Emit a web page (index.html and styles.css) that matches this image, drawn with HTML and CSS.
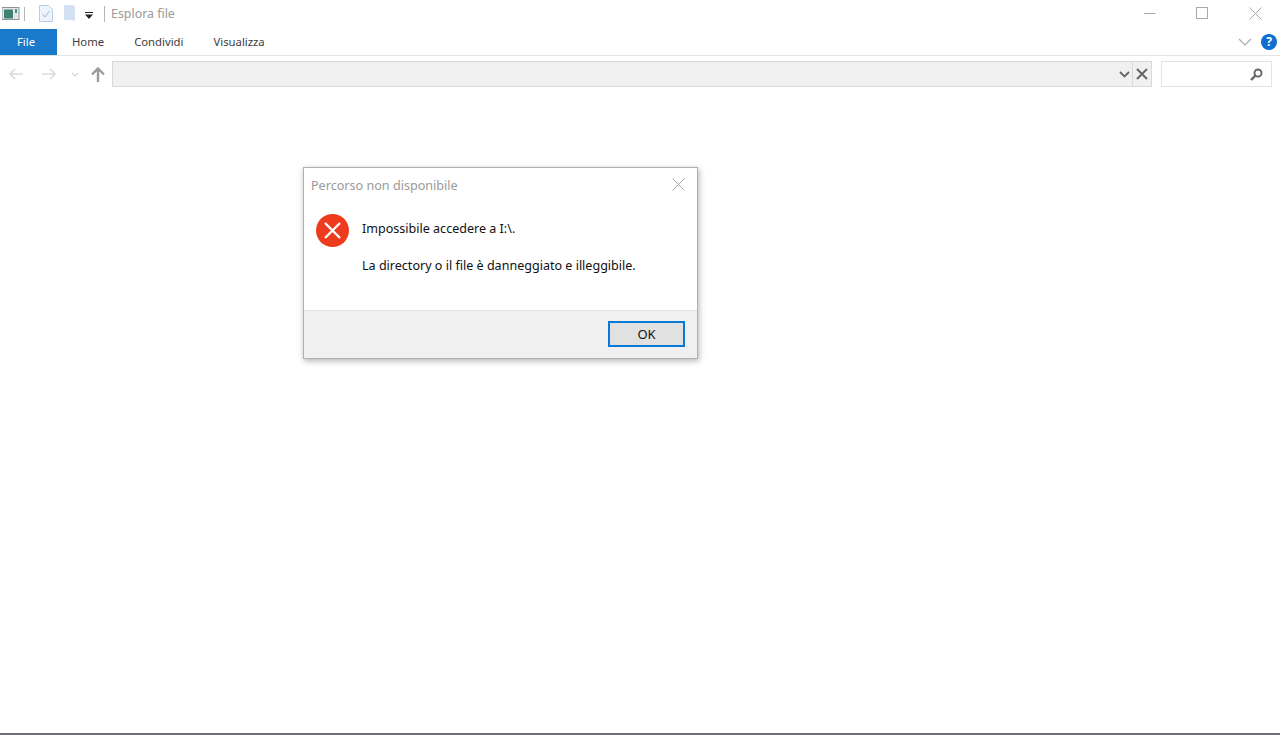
FILE: index.html
```html
<!DOCTYPE html>
<html lang="it">
<head>
  <meta charset="UTF-8">
  <title>Esplora file</title>
  <link rel="stylesheet" href="styles.css">
</head>
<body>
  <div class="window">
    <div class="titlebar">
      <svg class="qa-app" width="20" height="16" viewBox="0 0 20 16">
        <rect x="0" y="1.500" width="17" height="12" fill="#e4e8ea" stroke="#8b9499"/>
        <rect x="2" y="3.500" width="9" height="9" fill="#3f8273"/>
        <rect x="13" y="3" width="2" height="4" fill="#4d8d80"/>
      </svg>
      <span class="qa-sep"></span>
      <svg class="qa-check" width="14" height="17" viewBox="0 0 14 17">
        <path d="M.5.5h9l4 4v12H.5z" fill="#eef4fb" stroke="#b5cbe6"/>
        <path d="M3.5 9l2.5 3 4.5-6" fill="none" stroke="#9db8d6"/>
      </svg>
      <svg class="qa-folder" width="11" height="17" viewBox="0 0 11 17">
        <path d="M0 0h8l3 1v15l-3-1H0z" fill="#d3e1f3"/>
      </svg>
      <svg class="qa-more" width="8" height="7" viewBox="0 0 8 7">
        <rect x="0" y="0" width="8" height="1" fill="#222"/>
        <path d="M0 2.500h8L4 7z" fill="#222"/>
      </svg>
      <span class="qa-sep qa-sep-tall"></span>
      <span class="title">Esplora file</span>
      <div class="win-controls">
        <svg width="13" height="13" viewBox="0 0 13 13"><path d="M1 6.500h11.500" stroke="#a9a9a9"/></svg>
        <svg width="13" height="13" viewBox="0 0 13 13"><rect x=".5" y=".5" width="11" height="11" fill="none" stroke="#a9a9a9"/></svg>
        <svg width="13" height="13" viewBox="0 0 13 13"><path d="M.5.500l12 12M12.500.500l-12 12" stroke="#a9a9a9"/></svg>
      </div>
    </div>

    <div class="ribbon">
      <div class="tab tab-file">File</div>
      <div class="tab">Home</div>
      <div class="tab">Condividi</div>
      <div class="tab">Visualizza</div>
      <div class="ribbon-right">
        <svg width="14" height="8" viewBox="0 0 14 8"><path d="M1 1l6 6 6-6" fill="none" stroke="#a9a9a9" stroke-width="1.200"/></svg>
        <span class="help">?</span>
      </div>
    </div>

    <div class="navbar">
      <svg class="nav-back" width="16" height="12" viewBox="0 0 16 12"><path d="M15 6H2M7 1L2 6l5 5" fill="none" stroke="#dcdcdc" stroke-width="1.600"/></svg>
      <svg class="nav-forward" width="16" height="12" viewBox="0 0 16 12"><path d="M1 6h13M9 1l5 5-5 5" fill="none" stroke="#dcdcdc" stroke-width="1.600"/></svg>
      <svg class="nav-recent" width="8" height="5" viewBox="0 0 8 5"><path d="M1 1l3 3 3-3" fill="none" stroke="#d5d5d5" stroke-width="1.200"/></svg>
      <svg class="nav-up" width="14" height="15" viewBox="0 0 14 15"><path d="M7 15V2M1 7.500L7 1.500l6 6" fill="none" stroke="#9a9a9a" stroke-width="2.400"/></svg>
      <div class="address">
        <div class="address-field">
          <svg width="11" height="7" viewBox="0 0 11 7"><path d="M1 1l4.500 4.500L10 1" fill="none" stroke="#666" stroke-width="1.800"/></svg>
        </div>
        <div class="address-stop">
          <svg width="12" height="12" viewBox="0 0 12 12"><path d="M1 1l10 10M11 1L1 11" stroke="#666" stroke-width="2"/></svg>
        </div>
      </div>
      <div class="search">
        <svg width="13" height="13" viewBox="0 0 13 13"><circle cx="8" cy="5" r="3.500" fill="none" stroke="#666" stroke-width="1.900"/><path d="M5.500 7.500L1 12" stroke="#666" stroke-width="2.400"/></svg>
      </div>
    </div>
  </div>

  <div class="dialog">
    <div class="dialog-head">
      <span class="dialog-title">Percorso non disponibile</span>
      <svg width="13" height="13" viewBox="0 0 13 13"><path d="M.5.500l12 12M12.500.500l-12 12" stroke="#a9a9a9"/></svg>
    </div>
    <div class="dialog-body">
      <svg class="error-icon" width="33" height="33" viewBox="0 0 33 33">
        <circle cx="16.500" cy="16.500" r="16.500" fill="#ef3b1d"/>
        <path d="M9 9l15 15M24 9L9 24" stroke="#fff" stroke-width="2.400"/>
      </svg>
      <div class="message">
        <p>Impossibile accedere a I:\.</p>
        <p>La directory o il file è danneggiato e illeggibile.</p>
      </div>
    </div>
    <div class="dialog-foot">
      <button class="ok">OK</button>
    </div>
  </div>
</body>
</html>
```

FILE: styles.css
```css
* {
  margin: 0;
  padding: 0;
  box-sizing: border-box;
}

body {
  background: #fff;
  font-family: "Noto Sans", "Open Sans", sans-serif;
  height: 735px;
  overflow: hidden;
  position: relative;
  border-bottom: 2px solid #6b7076;
}

.titlebar {
  height: 29px;
  display: flex;
  align-items: center;
  padding: 0 0 2px 2px;
}

.qa-sep {
  width: 1px;
  height: 14px;
  background: #b5b5b5;
  margin-left: 2px;
}

.qa-check { margin-left: 14px; }
.qa-folder { margin-left: 11px; }
.qa-more { margin-left: 10px; margin-top: 3px; }
.qa-sep-tall { height: 16px; margin-left: 11px; }

.title {
  font-size: 12.400px;
  color: #9a9a9a;
  margin-left: 6px;
}

.win-controls {
  margin-left: auto;
  display: flex;
  gap: 40px;
  padding-right: 18px;
  align-items: center;
}

.ribbon {
  height: 27px;
  display: flex;
  border-bottom: 1px solid #e4e4e4;
}

.tab {
  font-size: 11.300px;
  color: #3c3c3c;
  line-height: 26px;
  padding: 0 15px;
}

.tab-file {
  width: 57px;
  background: #1979ca;
  color: #fff;
  text-align: center;
  padding: 0 5px 0 0;
}

.ribbon-right {
  margin-left: auto;
  display: flex;
  align-items: center;
  gap: 9px;
  padding-right: 3px;
}

.help {
  width: 16px;
  height: 16px;
  border-radius: 50%;
  background: #0f6fd0;
  color: #fff;
  font-size: 12px;
  font-weight: 700;
  line-height: 16px;
  text-align: center;
}

.navbar {
  height: 36px;
  display: flex;
  align-items: center;
  padding: 0 8px;
}

.nav-forward { margin-left: 17px; }
.nav-recent { margin-left: 14px; }
.nav-up { margin-left: 12px; }

.address {
  width: 1040px;
  height: 26px;
  margin-left: 7px;
  display: flex;
  background: #f0f0f0;
  border: 1px solid #d9d9d9;
}

.address-field {
  flex: 1;
  display: flex;
  align-items: center;
  justify-content: flex-end;
  padding-right: 2px;
  border-right: 1px solid #d9d9d9;
}

.address-stop {
  width: 18px;
  display: flex;
  align-items: center;
  justify-content: center;
}

.search {
  width: 111px;
  height: 26px;
  margin-left: 9px;
  border: 1px solid #e3e3e3;
  display: flex;
  align-items: center;
  justify-content: flex-end;
  padding-right: 8px;
}

/* finestra di errore sopra l'esplora file */
.dialog {
  position: absolute;
  left: 303px;
  top: 167px;
  width: 395px;
  height: 192px;
  background: #fff;
  border: 1px solid #b0b0b0;
  box-shadow: 1px 2px 6px rgba(0, 0, 0, 0.3);
  display: flex;
  flex-direction: column;
}

.dialog-head {
  height: 33px;
  display: flex;
  align-items: center;
  justify-content: space-between;
  padding: 0 12px 0 7px;
}

.dialog-title {
  font-size: 12.600px;
  color: #9a9a9a;
  padding-top: 2px;
}

.dialog-body {
  flex: 1;
  display: flex;
  padding: 13px 0 0 12px;
}

.error-icon { flex-shrink: 0; }

.message {
  margin-left: 13px;
  padding-top: 6px;
  font-size: 12.550px;
  color: #111;
}

.message p {
  line-height: 18px;
  margin-bottom: 19px;
}

.dialog-foot {
  height: 48px;
  background: #f0f0f0;
  border-top: 1px solid #e4e4e4;
  display: flex;
  align-items: center;
  justify-content: flex-end;
  padding: 0 12px 2px 0;
}

.ok {
  width: 77px;
  height: 26px;
  background: #e1e1e1;
  border: 2px solid #0a78d7;
  font-family: inherit;
  font-size: 13px;
  color: #111;
}
```
